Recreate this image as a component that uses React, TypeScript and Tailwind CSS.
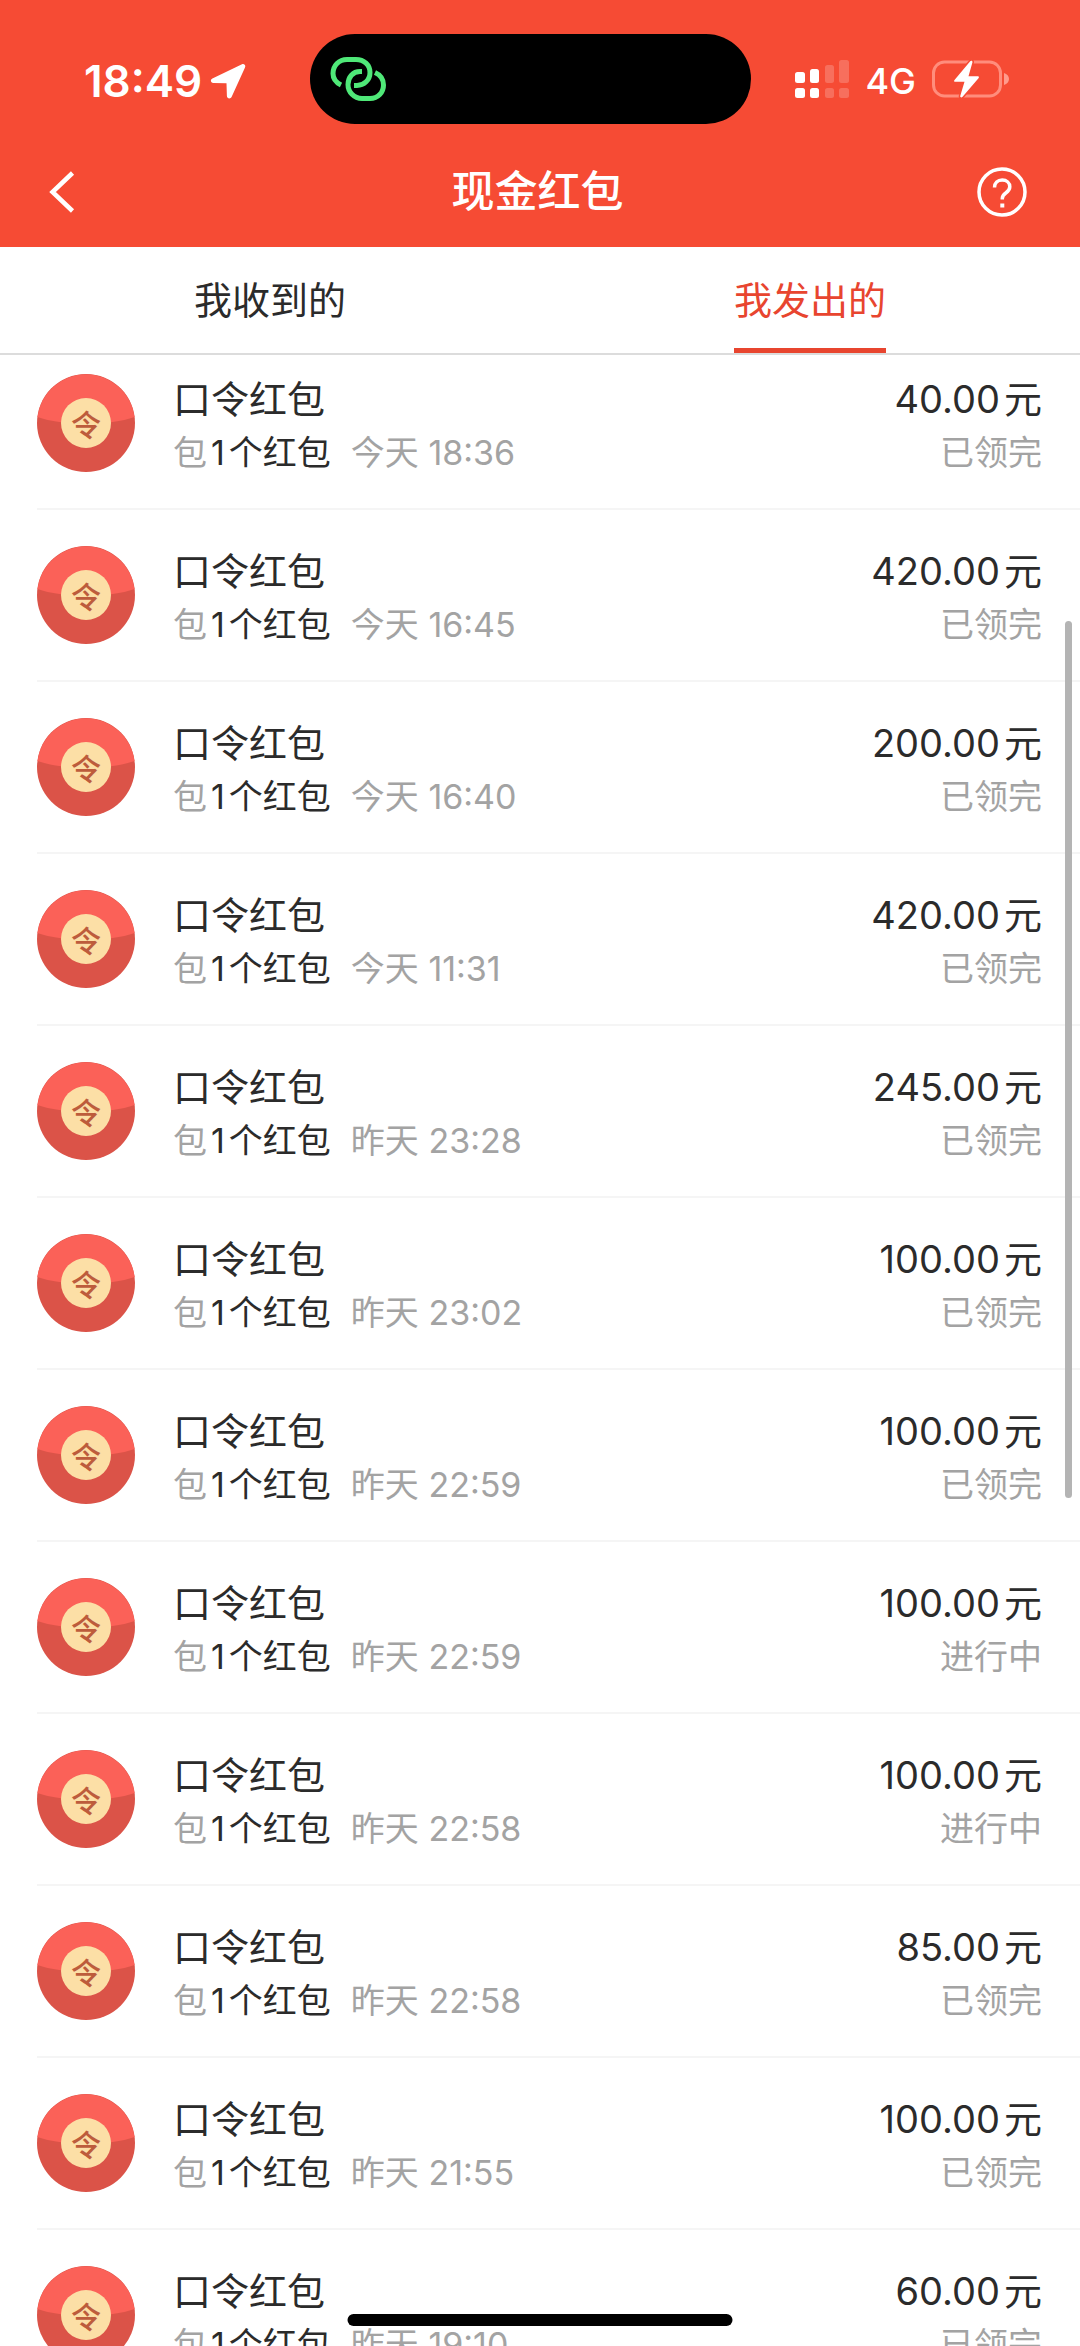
const records = [
  { time: "今天 18:36", amount: "40.00", status: "已领完" },
  { time: "今天 16:45", amount: "420.00", status: "已领完" },
  { time: "今天 16:40", amount: "200.00", status: "已领完" },
  { time: "今天 11:31", amount: "420.00", status: "已领完" },
  { time: "昨天 23:28", amount: "245.00", status: "已领完" },
  { time: "昨天 23:02", amount: "100.00", status: "已领完" },
  { time: "昨天 22:59", amount: "100.00", status: "已领完" },
  { time: "昨天 22:59", amount: "100.00", status: "进行中" },
  { time: "昨天 22:58", amount: "100.00", status: "进行中" },
  { time: "昨天 22:58", amount: "85.00", status: "已领完" },
  { time: "昨天 21:55", amount: "100.00", status: "已领完" },
  { time: "昨天 19:10", amount: "60.00", status: "已领完" },
];

function StatusBar() {
  return (
    <div className="flex h-[124px] items-end pr-[71px] pl-[84px]">
      <div className="flex h-[90px] w-[226px] items-center gap-2 pt-1">
        <span className="text-[44px] leading-none font-semibold">18:49</span>
        <svg className="h-[36px] w-[36px]" viewBox="0 0 36 36" fill="currentColor">
          <path d="M32 1.2 2.4 15.4c-2.4 1.2-1.8 4.4.9 4.5l13.2.4.4 12.6c.1 2.9 3.6 3.4 4.8.9L35 4.4c1-2.2-.9-4.2-3-3.2Z" />
        </svg>
      </div>
      <div className="flex h-[90px] w-[441px] items-center rounded-full bg-black pl-5">
        <svg
          className="h-[46px] w-[56px]"
          viewBox="0 0 56 46"
          fill="none"
          stroke="#4fe878"
          strokeWidth="5"
        >
          <path d="M11 29C6 26.500 3 22.500 3 17.500 3 9.500 9 3.500 17 3.500h9c8 0 14 5.500 14 13S34 29.500 27 29.500h-3" />
          <path d="M32 15.500h-2c-7 0-12 5.500-12 13s6 14 14 14h8c8 0 13.500-6 13.500-13.500 0-5.500-3-10-8.500-12.500" />
        </svg>
      </div>
      <div className="ml-auto flex h-[90px] items-center">
        <svg className="h-[38px] w-[54px]" viewBox="0 0 54 38" fill="currentColor">
          <rect x="0" y="12" width="10" height="11" rx="2.500" />
          <rect x="0" y="28" width="10" height="10" rx="2.500" />
          <rect x="15" y="9" width="9" height="14" rx="2.500" />
          <rect x="15" y="28" width="9" height="10" rx="2.500" />
          <g opacity="0.2">
            <rect x="30" y="5" width="9" height="18" rx="2.500" />
            <rect x="30" y="28" width="9" height="10" rx="2.500" />
            <rect x="44" y="0" width="10" height="23" rx="2.500" />
            <rect x="44" y="28" width="10" height="10" rx="2.500" />
          </g>
        </svg>
        <span className="ml-4 pt-1 text-[36px] leading-none font-medium">4G</span>
        <svg className="ml-4 h-[38px] w-[77px]" viewBox="0 0 77 38" fill="none">
          <rect x="1.500" y="2" width="67" height="34" rx="11" stroke="#ff8d7c" strokeWidth="3" />
          <path d="M72 13c3 1 5 3.300 5 6s-2 5-5 6Z" fill="#ff9b8c" />
          <path
            d="M38 1.500 22.500 20c-.8 1-.3 1.800.8 1.800h9.200L28.300 35.800c-.4 1.700 1.200 2.300 2.300 1L46.500 18.200c.8-1 .3-1.900-.8-1.900h-9.200L40.400 2.500C40.800.8 39 .2 38 1.500Z"
            fill="#fff"
            stroke="#f64b34"
            strokeWidth="3"
            paintOrder="stroke"
          />
        </svg>
      </div>
    </div>
  );
}

function NavBar() {
  return (
    <div className="flex h-[123px] items-center justify-between pt-6 pr-[53px] pb-3 pl-[48px]">
      <button type="button" aria-label="返回" className="flex w-[50px]">
        <svg className="h-[44px] w-[28px]" viewBox="0 0 28 44" fill="none">
          <path d="M24.500 3 4.500 22l20 19" stroke="currentColor" strokeWidth="4.500" />
        </svg>
      </button>
      <h1 className="text-[43px] leading-none font-medium">现金红包</h1>
      <button type="button" aria-label="帮助">
        <svg className="h-[50px] w-[50px]" viewBox="0 0 50 50" fill="none" stroke="currentColor">
          <circle cx="25" cy="25" r="23" strokeWidth="3.500" />
          <path d="M17.500 20.500c0-4.500 3.300-7.500 7.700-7.500s7.600 2.900 7.600 6.800c0 3-1.600 4.500-4 6.200-2.500 1.700-3.500 3-3.500 5.500v1" strokeWidth="3.500" />
          <path d="M25.300 36.500v4" strokeWidth="4" />
        </svg>
      </button>
    </div>
  );
}

function Tabs() {
  return (
    <div className="relative z-10 flex h-[108px] shrink-0 border-b-2 border-[#dcdcdc] bg-white text-[38px] leading-none">
      <button type="button" className="flex flex-1 justify-center">
        <span className="flex h-full items-center border-y-5 border-transparent">我收到的</span>
      </button>
      <button type="button" className="flex flex-1 justify-center text-[#e8452f]">
        <span className="flex h-full items-center border-y-5 border-t-transparent border-b-[#e8452f]">
          我发出的
        </span>
      </button>
    </div>
  );
}

function PacketIcon() {
  return (
    <div className="relative flex h-[98px] w-[98px] shrink-0 items-center justify-center">
      <svg className="absolute inset-0" viewBox="0 0 98 98">
        <circle cx="49" cy="49" r="49" fill="#db5348" />
        <path d="M.4 43a49 49 0 0 1 97.200 0C85 47.500 68 49.500 49 49.500S13 47.500.4 43Z" fill="#fb6158" />
        <circle cx="49" cy="49" r="25" fill="#fcdfa6" />
      </svg>
      <span className="relative pt-1 text-[30px] leading-none font-medium text-[#bd5c3c]">令</span>
    </div>
  );
}

function Row({ time, amount, status }: (typeof records)[number]) {
  return (
    <li className="ml-[37px] flex h-[172px] shrink-0 items-center border-b-2 border-[#f5f5f5] pr-[38px]">
      <PacketIcon />
      <div className="ml-[38px] flex-1 pt-[6px]">
        <p className="text-[38px] leading-[54px]">口令红包</p>
        <p className="flex text-[34px] leading-[54px] text-[#a3a3a3]">
          包
          <span className="ml-1 flex gap-1 text-[#2b2b2b]">
            <span>1</span>
            <span>个红包</span>
          </span>
          <span className="ml-5">{time}</span>
        </p>
      </div>
      <div className="pt-[6px] text-right">
        <p className="text-[38px] leading-[54px]">
          {amount}
          <span className="ml-1">元</span>
        </p>
        <p className="text-[34px] leading-[54px] text-[#a3a3a3]">{status}</p>
      </div>
    </li>
  );
}

export default function App() {
  return (
    <div className="relative flex h-screen flex-col overflow-hidden bg-white font-['Inter','Noto_Sans_CJK_SC',sans-serif] text-[#2b2b2b]">
      <header className="shrink-0 bg-[#f64b34] text-white">
        <StatusBar />
        <NavBar />
      </header>
      <Tabs />
      {/* the list is scrolled slightly under the tabs */}
      <ul className="-mt-[17px] flex min-h-0 flex-1 flex-col overflow-hidden">
        {records.map((record, i) => (
          <Row key={i} {...record} />
        ))}
      </ul>
      <div className="absolute top-[621px] right-2 h-[877px] w-[7px] rounded-full bg-[#b4b4b4]" />
      <div className="absolute bottom-5 left-1/2 h-[12px] w-[385px] -translate-x-1/2 rounded-full bg-black" />
    </div>
  );
}
